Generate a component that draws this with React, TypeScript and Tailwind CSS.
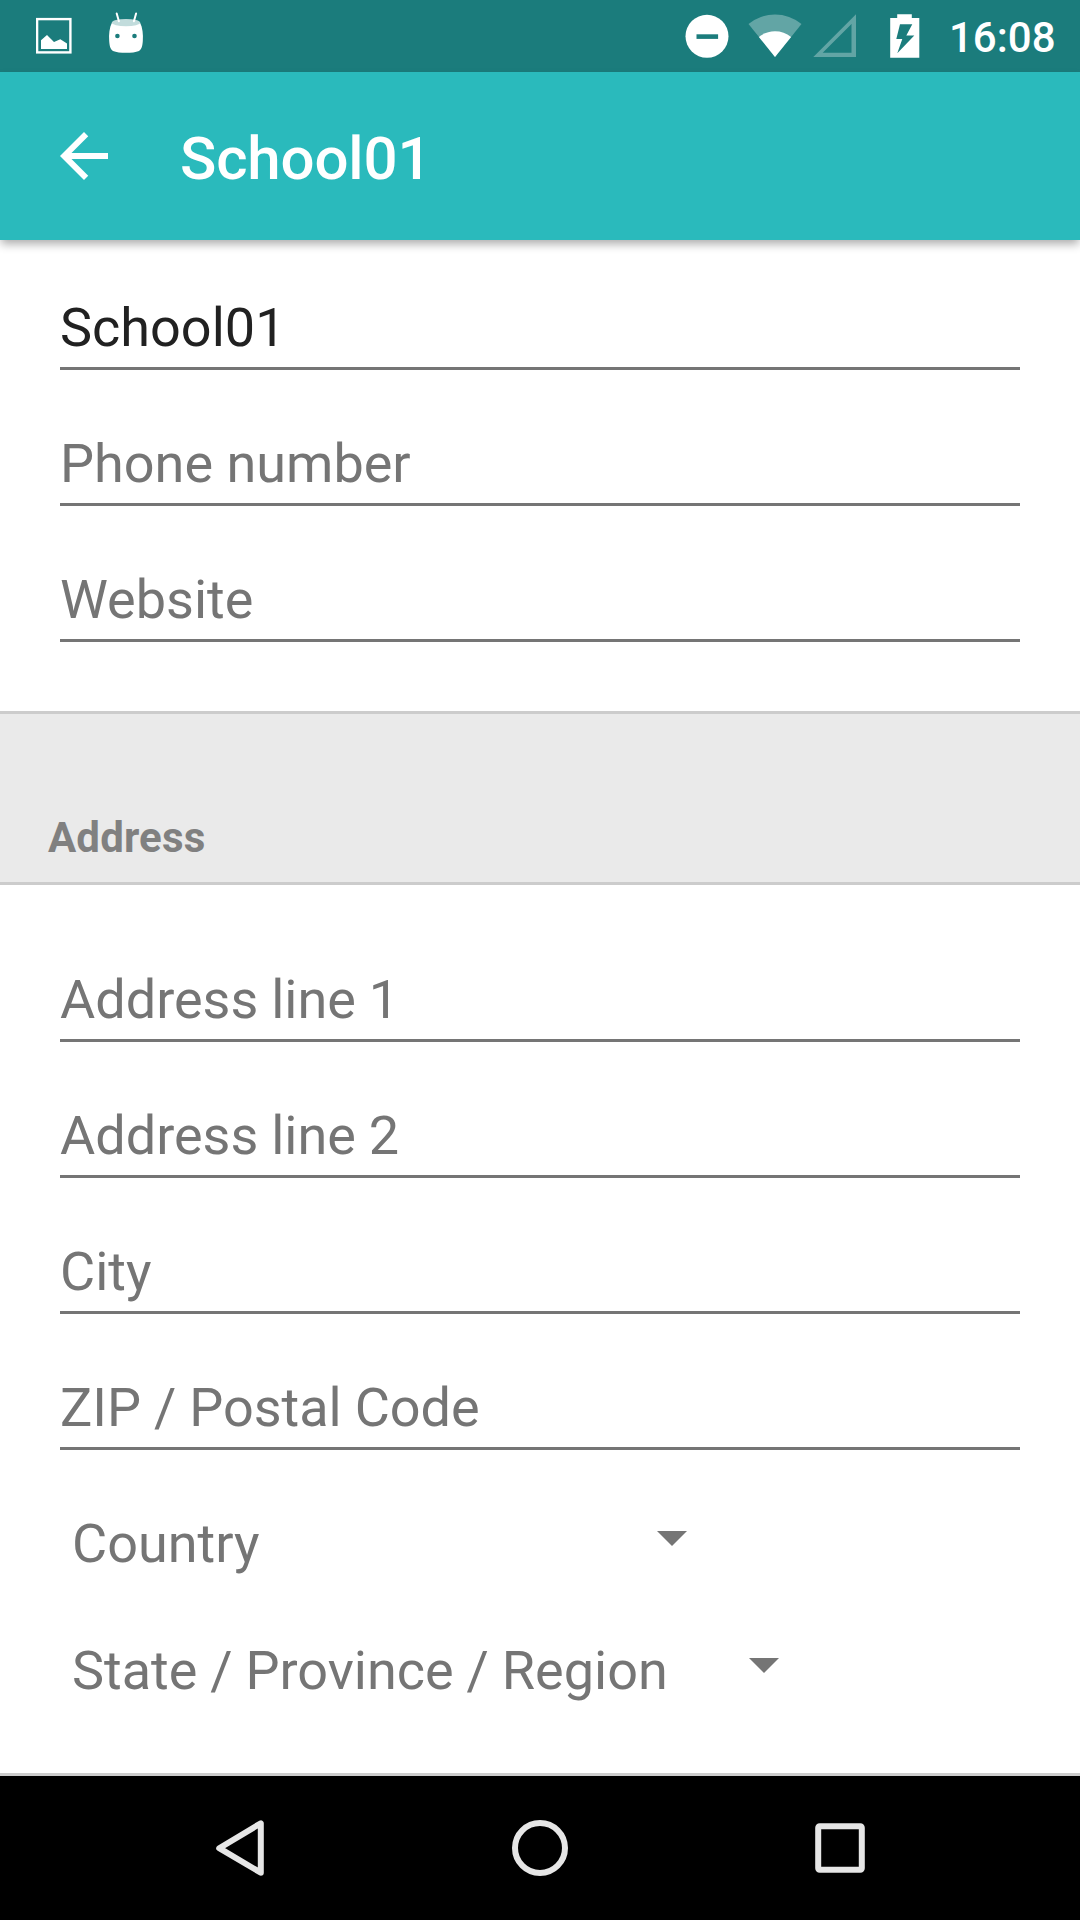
import React from "react";

function StatusBar() {
  return (
    <header className="flex h-[72px] items-center bg-[#1b7c7c] text-white">
      <svg className="ml-9 h-[72px] w-9" viewBox="36 0 36 72" fill="currentColor">
        <rect x="37.1" y="19.1" width="33.3" height="33.3" fill="none" stroke="currentColor" strokeWidth="2.4" />
        <path d="M41 40.3l6-5.2 7 6.8 6.3-2.7 6.7 4.3V49H41z" />
      </svg>
      <svg className="ml-9 h-[72px] w-9" viewBox="108 0 36 72" fill="currentColor">
        <path d="M112 22.5c-2.6 5-3.3 12-2.8 18.500c.4 5.600 1.300 8.400 3.800 9.900c6 2.600 20 2.600 26 0c2.500-1.500 3.400-4.300 3.800-9.900c.5-6.500-.2-13.500-2.800-18.500z" />
        <ellipse cx="126" cy="22.600" rx="14.200" ry="3.700" fill="#c2dcdc" />
        <path d="M116.700 13.500l2.200 7.800M136.100 13.500l-2.200 7.800" stroke="currentColor" strokeWidth="2" strokeLinecap="round" />
        <circle cx="117.400" cy="36" r="2.300" fill="#1b7c7c" />
        <circle cx="134.500" cy="36" r="2.300" fill="#1b7c7c" />
      </svg>
      <svg className="ml-auto h-[72px] w-11" viewBox="685.500 0 44 72">
        <circle cx="707.500" cy="36.300" r="21.500" fill="currentColor" />
        <rect x="697" y="34.300" width="21.600" height="4.600" fill="#1b7c7c" />
      </svg>
      <svg className="ml-[19px] h-[72px] w-[54px]" viewBox="748.500 0 54 72">
        <path d="M775.500 57L749 23.900a42.300 42.300 0 0 1 53 0z" fill="#62a5a5" />
        <path d="M775.500 57L759.400 36.900a25.700 25.700 0 0 1 32.200 0z" fill="currentColor" />
      </svg>
      <svg className="ml-[10.500px] h-[72px] w-[43px]" viewBox="813 0 43 72">
        <path d="M856 14.300V57H813.300zM851.500 24L822.700 52.700H851.500z" fill="#62a5a5" fillRule="evenodd" />
      </svg>
      <svg className="ml-[34px] h-[72px] w-[30px]" viewBox="890 0 30 72">
        <path d="M890.200 18H897.200V14.200H911.800V18H919.300V57.800H890.200zM900 24.300L896.300 39H902.300L897.300 53.200L914.300 35.500H906.300L912.300 24.300z" fill="currentColor" fillRule="evenodd" />
      </svg>
      <span className="mr-[25px] ml-[29.500px] w-[106px] pt-[3px] text-[42px] leading-[50px] font-medium whitespace-nowrap">16:08</span>
    </header>
  );
}

function AppBar() {
  return (
    <div className="relative z-10 flex h-[168px] items-center bg-[#2ababc] pl-12 text-white shadow-[0_5px_9px_-1px_rgba(0,0,0,0.33)]">
      <svg className="h-[72px] w-[72px]" viewBox="0 0 24 24" fill="currentColor">
        <path d="M20 11H7.830l5.590-5.590L12 4l-8 8 8 8 1.410-1.410L7.830 13H20v-2z" />
      </svg>
      <h1 className="ml-[60px] pt-[5px] text-[60px] leading-[72px] font-medium tracking-[-0.15px]">School01</h1>
    </div>
  );
}

function Field({ text, filled = false }: { text: string; filled?: boolean }) {
  return (
    <div className={"border-b-3 border-[#757575] pb-[7px] " + (filled ? "text-[#212121]" : "text-[#757575]")}>
      <div className="h-16 text-[54px] leading-[64px]">{text}</div>
    </div>
  );
}

function Spinner({ text, width }: { text: string; width: string }) {
  return (
    <div className={"ml-3 flex h-16 items-center justify-between text-[54px] leading-[64px] text-[#757575] " + width}>
      <span className="whitespace-nowrap">{text}</span>
      <svg className="mb-[11px] h-[15px] w-[30px]" viewBox="0 0 30 15" fill="currentColor">
        <path d="M0 0h30L15 15z" />
      </svg>
    </div>
  );
}

function NavBar() {
  return (
    <nav className="flex h-36 items-center bg-black px-[90px] text-[#e6e6e6]">
      <div className="flex flex-1 justify-center">
        <svg className="h-[60px] w-[60px]" viewBox="0 0 60 60" fill="none" stroke="currentColor" strokeWidth="6">
          <path d="M50.800 5.300v49.400L9.200 30.200z" strokeLinejoin="round" />
        </svg>
      </div>
      <div className="flex flex-1 justify-center">
        <svg className="h-[60px] w-[60px]" viewBox="0 0 60 60" fill="none" stroke="currentColor" strokeWidth="6">
          <circle cx="30" cy="30" r="25" />
        </svg>
      </div>
      <div className="flex flex-1 justify-center">
        <svg className="h-[60px] w-[60px]" viewBox="0 0 60 60" fill="none" stroke="currentColor" strokeWidth="6">
          <rect x="8.200" y="8.200" width="43.600" height="43.600" rx="1.500" />
        </svg>
      </div>
    </nav>
  );
}

export default function App() {
  return (
    <div className="flex h-[1920px] w-[1080px] flex-col overflow-hidden bg-white font-['Roboto',sans-serif]">
      <StatusBar />
      <AppBar />
      <section className="flex h-[471px] flex-col gap-[62px] px-[60px] pt-14">
        <Field text="School01" filled />
        <Field text="Phone number" />
        <Field text="Website" />
      </section>
      <div className="flex h-[174px] items-end border-y-3 border-[#cccccc] bg-[#eaeaea] px-12 pb-[19px]">
        <h2 className="text-[42px] leading-[50px] font-bold tracking-[0.15px] text-[#808080]">Address</h2>
      </div>
      <section className="flex flex-1 flex-col gap-[62px] border-b-3 border-[#cccccc] px-[60px] pt-[83px] [word-spacing:-0.5px]">
        <Field text="Address line 1" />
        <Field text="Address line 2" />
        <Field text="City" />
        <Field text="ZIP / Postal Code" />
        <div className="flex flex-col gap-[63px]">
          <Spinner text="Country" width="w-[615px]" />
          <Spinner text="State / Province / Region" width="w-[707px]" />
        </div>
      </section>
      <NavBar />
    </div>
  );
}
